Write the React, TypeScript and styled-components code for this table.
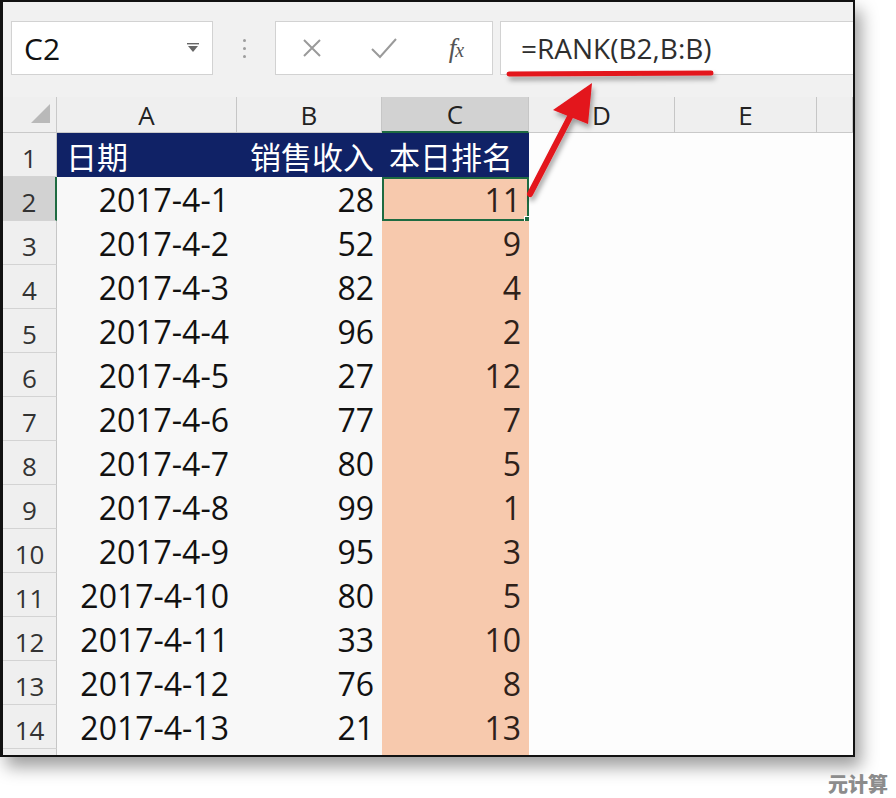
import React from 'react';
import styled, { createGlobalStyle } from 'styled-components';

const Global = createGlobalStyle`
  html, body { margin: 0; padding: 0; background: #fff; }
  body {
    width: 896px; height: 798px; overflow: hidden;
    font-family: "Open Sans", "Noto Sans CJK SC", sans-serif;
  }
`;

const Page = styled.div`
  position: relative;
  width: 896px;
  height: 798px;
  background: #fff;
  display: flex;
  flex-direction: column;
`;

const Frame = styled.div`
  width: 855px;
  height: 757px;
  box-sizing: border-box;
  border: 2px solid #121212;
  border-left-width: 3px;
  background: #fff;
  box-shadow: 6px 10px 16px rgba(0, 0, 0, 0.38);
  display: flex;
  flex-direction: column;
  overflow: hidden;
`;

const Toolbar = styled.div`
  height: 95px;
  flex: none;
  box-sizing: border-box;
  background: #f1f1f1;
  display: flex;
  align-items: flex-start;
  padding: 19px 0 0 8px;
`;

const NameBox = styled.div`
  width: 202px;
  height: 54px;
  box-sizing: border-box;
  border: 1px solid #d2d2d2;
  background: #fff;
  display: flex;
  align-items: center;
  padding: 0 12px 0 12px;
  font-size: 30px;
  color: #111;
`;

const Dropdown = styled.svg`
  margin-left: auto;
  width: 14px;
  height: 10px;
`;

const Splitter = styled.div`
  width: 62px;
  height: 54px;
  display: flex;
  flex-direction: column;
  align-items: center;
  justify-content: center;
  gap: 5px;
`;

const Dot = styled.span`
  width: 3px;
  height: 3px;
  border-radius: 50%;
  background: #9d9d9d;
`;

const ButtonBox = styled.div`
  width: 218px;
  height: 54px;
  box-sizing: border-box;
  border: 1px solid #d2d2d2;
  background: #fff;
  display: grid;
  grid-template-columns: repeat(3, 72px);
  align-items: center;
  justify-items: center;
`;

const Fx = styled.span`
  font-family: "Liberation Serif", "DejaVu Serif", serif;
  font-style: italic;
  font-size: 27px;
  color: #555;
  letter-spacing: -1px;
  & > small { font-size: 20px; }
`;

const FormulaBox = styled.div`
  flex: 1;
  margin-left: 7px;
  height: 54px;
  box-sizing: border-box;
  border: 1px solid #d2d2d2;
  border-right: none;
  background: #fff;
  display: flex;
  align-items: center;
  padding-left: 20px;
  font-size: 28px;
  color: #2e2e2e;
`;

const Sheet = styled.div`
  flex: 1;
  display: grid;
  grid-template-columns: 54px 180px 145px 147px 146px 142px 1fr;
  grid-template-rows: 36px repeat(14, 44px) 1fr;
`;

const Corner = styled.div`
  background: #efefef;
  border-right: 1px solid #c9c9c9;
  border-bottom: 1px solid #c9c9c9;
  display: flex;
  align-items: flex-end;
  justify-content: flex-end;
  padding: 0 6px 9px 0;
`;

const ColHead = styled.div<{ $sel?: boolean }>`
  background: ${(p) => (p.$sel ? '#d2d2d2' : '#efefef')};
  border-right: 1px solid #c6c6c6;
  border-bottom: ${(p) => (p.$sel ? '2px solid #1e6b41' : '1px solid #c9c9c9')};
  display: flex;
  align-items: center;
  justify-content: center;
  font-size: 26px;
  color: #222;
  box-sizing: border-box;
`;

const RowHead = styled.div<{ $sel?: boolean }>`
  background: ${(p) => (p.$sel ? '#d2d2d2' : '#efefef')};
  border-right: ${(p) => (p.$sel ? '2px solid #1e6b41' : '1px solid #c6c6c6')};
  border-bottom: 1px solid #d3d3d3;
  display: flex;
  align-items: center;
  justify-content: center;
  padding-top: 7px;
  font-size: 26px;
  color: #333;
  box-sizing: border-box;
`;

const Cell = styled.div<{ $kind: 'head' | 'data' | 'rank' | 'empty'; $left?: boolean; $sel?: boolean; $pr?: number }>`
  position: relative;
  box-sizing: border-box;
  display: flex;
  align-items: center;
  justify-content: ${(p) => (p.$left ? 'flex-start' : 'flex-end')};
  padding: 0 ${(p) => (p.$pr ?? 8)}px 0 9px;
  white-space: nowrap;
  background: ${(p) =>
    p.$kind === 'head' ? '#102266' : p.$kind === 'rank' ? '#f7c9ad' : p.$kind === 'data' ? '#f8f8f8' : '#fdfdfd'};
  color: ${(p) => (p.$kind === 'head' ? '#fff' : p.$kind === 'rank' ? '#2e211a' : '#111')};
  font-family: ${(p) => (p.$kind === 'head' ? '"Noto Sans CJK SC", sans-serif' : '"Open Sans", sans-serif')};
  font-size: ${(p) => (p.$kind === 'head' ? '31px' : '32px')};
  ${(p) => (p.$sel ? 'border: 2px solid #1e6b41;' : '')}
  ${(p) =>
    p.$sel
      ? `&::after {
          content: '';
          position: absolute;
          right: -6px;
          bottom: -6px;
          width: 7px;
          height: 7px;
          background: #1e6b41;
          border: 1px solid #fff;
        }`
      : ''}
`;

const Footer = styled.div`
  display: flex;
  justify-content: flex-end;
  padding: 12px 8px 0 0;
`;

const Watermark = styled.span`
  font-family: "Noto Sans CJK SC", sans-serif;
  font-weight: 900;
  font-size: 20px;
  color: #8c8c8c;
`;

const Overlay = styled.svg`
  position: absolute;
  left: 0;
  top: 0;
  width: 896px;
  height: 798px;
  pointer-events: none;
`;

const data: [string, number, number][] = [
  ['2017-4-1', 28, 11],
  ['2017-4-2', 52, 9],
  ['2017-4-3', 82, 4],
  ['2017-4-4', 96, 2],
  ['2017-4-5', 27, 12],
  ['2017-4-6', 77, 7],
  ['2017-4-7', 80, 5],
  ['2017-4-8', 99, 1],
  ['2017-4-9', 95, 3],
  ['2017-4-10', 80, 5],
  ['2017-4-11', 33, 10],
  ['2017-4-12', 76, 8],
  ['2017-4-13', 21, 13],
];

export default function App() {
  return (
    <Page>
      <Global />
      <Frame>
        <Toolbar>
          <NameBox>
            C2
            <Dropdown viewBox="0 0 14 10">
              <rect x="1" y="0" width="12" height="1.4" fill="#666" />
              <path d="M2 3 L12 3 L7 9 Z" fill="#666" />
            </Dropdown>
          </NameBox>
          <Splitter>
            <Dot />
            <Dot />
            <Dot />
          </Splitter>
          <ButtonBox>
            <svg width="20" height="20" viewBox="0 0 20 20">
              <path d="M2 2 L18 18 M18 2 L2 18" stroke="#9a9a9a" strokeWidth="2" fill="none" />
            </svg>
            <svg width="28" height="22" viewBox="0 0 28 22">
              <path d="M2 12 L10 20 L26 2" stroke="#9a9a9a" strokeWidth="2" fill="none" />
            </svg>
            <Fx>
              f<small>x</small>
            </Fx>
          </ButtonBox>
          <FormulaBox>=RANK(B2,B:B)</FormulaBox>
        </Toolbar>
        <Sheet>
          <Corner>
            <svg width="19" height="19" viewBox="0 0 19 19">
              <path d="M0 19 L19 0 L19 19 Z" fill="#b9b9b9" />
            </svg>
          </Corner>
          <ColHead>A</ColHead>
          <ColHead>B</ColHead>
          <ColHead $sel>C</ColHead>
          <ColHead>D</ColHead>
          <ColHead>E</ColHead>
          <ColHead />

          <RowHead>1</RowHead>
          <Cell $kind="head" $left>日期</Cell>
          <Cell $kind="head" $pr={8}>销售收入</Cell>
          <Cell $kind="head" $pr={16}>本日排名</Cell>
          <Cell $kind="empty" />
          <Cell $kind="empty" />
          <Cell $kind="empty" />

          {data.map(([d, s, r], i) => (
            <React.Fragment key={d}>
              <RowHead $sel={i === 0}>{i + 2}</RowHead>
              <Cell $kind="data">{d}</Cell>
              <Cell $kind="data">{s}</Cell>
              <Cell $kind="rank" $sel={i === 0} $pr={i === 0 ? 6 : 8}>{r}</Cell>
              <Cell $kind="empty" />
              <Cell $kind="empty" />
              <Cell $kind="empty" />
            </React.Fragment>
          ))}
          <RowHead />
          <Cell $kind="data" />
          <Cell $kind="data" />
          <Cell $kind="rank" />
          <Cell $kind="empty" />
          <Cell $kind="empty" />
          <Cell $kind="empty" />
        </Sheet>
      </Frame>
      <Footer>
        <Watermark>元计算</Watermark>
      </Footer>
      <Overlay viewBox="0 0 896 798">
        <defs>
          <filter id="sh" x="-20%" y="-20%" width="140%" height="160%">
            <feDropShadow dx="2" dy="4" stdDeviation="2.5" floodColor="#000" floodOpacity="0.35" />
          </filter>
        </defs>
        <g filter="url(#sh)">
          <line x1="509" y1="74" x2="711" y2="73" stroke="#e3141b" strokeWidth="5" strokeLinecap="round" />
          <line x1="530" y1="194" x2="572" y2="113" stroke="#e3141b" strokeWidth="6" strokeLinecap="round" />
          <path d="M592 83 L553 110 L588 124 Z" fill="#e3141b" />
        </g>
      </Overlay>
    </Page>
  );
}
